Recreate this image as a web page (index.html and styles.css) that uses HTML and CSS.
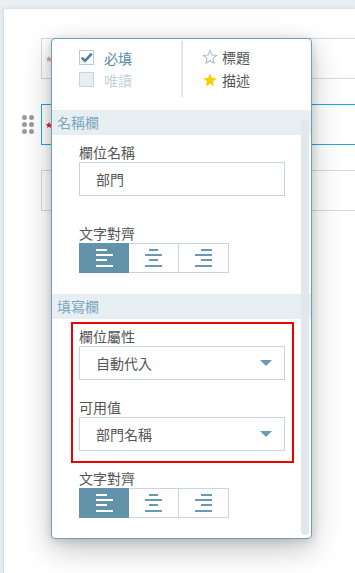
FILE: index.html
```html
<!DOCTYPE html>
<html lang="zh-Hant">
<head>
    <meta charset="UTF-8">
    <meta name="viewport" content="width=device-width, initial-scale=1.0">
    <title>欄位設定</title>
    <link rel="stylesheet" href="styles.css">
</head>
<body>
    <div class="sheet">
        <div class="field-row">
            <div class="handle-slot"></div>
            <div class="field-box">
                <svg class="req faded" viewBox="0 0 24 24"><path d="M12 2l2.9 6.9 7.1.6-5.4 4.7 1.6 7.1L12 17.6 5.8 21.3l1.6-7.1L2 9.5l7.1-.6z"/></svg>
            </div>
        </div>
        <div class="field-row">
            <div class="handle-slot">
                <div class="handle"><i></i><i></i><i></i><i></i><i></i><i></i></div>
            </div>
            <div class="field-box active">
                <svg class="req" viewBox="0 0 24 24"><path d="M12 2l2.9 6.9 7.1.6-5.4 4.7 1.6 7.1L12 17.6 5.8 21.3l1.6-7.1L2 9.5l7.1-.6z"/></svg>
            </div>
        </div>
        <div class="field-row">
            <div class="handle-slot"></div>
            <div class="field-box"></div>
        </div>
    </div>

    <div class="popover">
        <div class="pop-top">
            <div class="flags">
                <div class="check-item">
                    <span class="box">
                        <svg viewBox="0 0 13 13"><path d="M1.8 6.6 L5 9.8 L11.8 2.6"/></svg>
                    </span>
                    必填
                </div>
                <div class="check-item disabled">
                    <span class="box off"></span>
                    唯讀
                </div>
            </div>
            <div class="divider"></div>
            <div class="marks">
                <div class="mark-item">
                    <svg class="star outline" viewBox="0 0 24 24"><path d="M12 2l2.9 6.9 7.1.6-5.4 4.7 1.6 7.1L12 17.6 5.8 21.3l1.6-7.1L2 9.5l7.1-.6z"/></svg>
                    標題
                </div>
                <div class="mark-item">
                    <svg class="star filled" viewBox="0 0 24 24"><path d="M12 2l2.9 6.9 7.1.6-5.4 4.7 1.6 7.1L12 17.6 5.8 21.3l1.6-7.1L2 9.5l7.1-.6z"/></svg>
                    描述
                </div>
            </div>
        </div>

        <div class="section-head">名稱欄</div>
        <div class="section-body">
            <div class="label">欄位名稱</div>
            <div class="text-input">部門</div>
            <div class="label">文字對齊</div>
            <div class="align-group">
                <div class="align-btn on">
                    <svg viewBox="0 0 17 18"><rect x="0" y="0" width="11" height="2"/><rect x="0" y="5" width="17" height="2"/><rect x="0" y="10" width="11" height="2"/><rect x="0" y="16" width="17" height="2"/></svg>
                </div>
                <div class="align-btn">
                    <svg viewBox="0 0 17 18"><rect x="4" y="0" width="9" height="2"/><rect x="0" y="5" width="17" height="2"/><rect x="4" y="10" width="9" height="2"/><rect x="0" y="16" width="17" height="2"/></svg>
                </div>
                <div class="align-btn">
                    <svg viewBox="0 0 17 18"><rect x="6" y="0" width="11" height="2"/><rect x="0" y="5" width="17" height="2"/><rect x="6" y="10" width="11" height="2"/><rect x="0" y="16" width="17" height="2"/></svg>
                </div>
            </div>
        </div>

        <div class="section-head">填寫欄</div>
        <div class="section-body fill">
            <div class="highlight">
                <div class="label">欄位屬性</div>
                <div class="select">
                    <span>自動代入</span>
                    <span class="caret"></span>
                </div>
                <div class="label spaced">可用值</div>
                <div class="select">
                    <span>部門名稱</span>
                    <span class="caret"></span>
                </div>
            </div>
            <div class="label">文字對齊</div>
            <div class="align-group">
                <div class="align-btn on">
                    <svg viewBox="0 0 17 18"><rect x="0" y="0" width="11" height="2"/><rect x="0" y="5" width="17" height="2"/><rect x="0" y="10" width="11" height="2"/><rect x="0" y="16" width="17" height="2"/></svg>
                </div>
                <div class="align-btn">
                    <svg viewBox="0 0 17 18"><rect x="4" y="0" width="9" height="2"/><rect x="0" y="5" width="17" height="2"/><rect x="4" y="10" width="9" height="2"/><rect x="0" y="16" width="17" height="2"/></svg>
                </div>
                <div class="align-btn">
                    <svg viewBox="0 0 17 18"><rect x="6" y="0" width="11" height="2"/><rect x="0" y="5" width="17" height="2"/><rect x="6" y="10" width="11" height="2"/><rect x="0" y="16" width="17" height="2"/></svg>
                </div>
            </div>
        </div>

        <div class="scroll-thumb"></div>
    </div>
</body>
</html>
```

FILE: styles.css
```css
html, body {
    height: 100%;
}
body {
    margin: 0;
    background: #e9eef1;
    font-family: "Noto Sans CJK TC", "Noto Sans", sans-serif;
    overflow: hidden;
}
.sheet {
    margin: 9px 0 0 4px;
    height: 564px;
    box-sizing: border-box;
    padding-top: 29px;
    background: #fff;
    box-shadow: -1px 0 0 #d3dfe6, 0 0 4px rgba(90, 120, 140, 0.25);
    display: flex;
    flex-direction: column;
    gap: 25px;
}
.field-row {
    display: flex;
    height: 41px;
}
.handle-slot {
    width: 37px;
    flex: none;
    box-sizing: border-box;
    padding-left: 18px;
    display: flex;
    align-items: center;
}
.handle {
    display: grid;
    grid-template-columns: 5px 5px;
    gap: 2px 2px;
}
.handle i {
    width: 5px;
    height: 5px;
    border-radius: 50%;
    background: #9c9c9c;
}
.field-box {
    flex: 1;
    border: 1px solid #d9d9d9;
    border-right: none;
    display: flex;
    align-items: center;
    padding-left: 3px;
}
.field-box.active {
    border-color: #1fa9e1;
}
.req {
    width: 8px;
    height: 8px;
    fill: #e2262b;
}
.req.faded {
    fill: #eba3a6;
}

/* popover */
.popover {
    position: absolute;
    left: 51px;
    top: 38px;
    width: 261px;
    box-sizing: border-box;
    background: #fff;
    border: 1px solid #6d9fb5;
    border-radius: 4px;
    box-shadow: 0 10px 30px rgba(0, 0, 0, 0.24), 0 2px 10px rgba(0, 0, 0, 0.14);
}
.pop-top {
    display: flex;
    height: 71px;
}
.flags {
    width: 129px;
    box-sizing: border-box;
    padding: 11px 0 0 27px;
    display: flex;
    flex-direction: column;
    gap: 7px;
}
.check-item {
    display: flex;
    align-items: center;
    gap: 10px;
    height: 15px;
    font-size: 14px;
    color: #5a8aa4;
}
.check-item.disabled {
    color: #c3d5de;
}
.box {
    width: 15px;
    height: 15px;
    box-sizing: border-box;
    border: 1px solid #b8ccd7;
    background: #fff;
    display: flex;
}
.box svg {
    width: 13px;
    height: 13px;
    fill: none;
    stroke: #4f7f99;
    stroke-width: 2.6;
}
.box.off {
    background: #e7eef2;
    border-color: #c8d7df;
}
.divider {
    width: 2px;
    height: 56px;
    margin-top: 2px;
    background: #dfe7ec;
}
.marks {
    padding: 10px 0 0 19px;
    display: flex;
    flex-direction: column;
    gap: 8px;
}
.mark-item {
    display: flex;
    align-items: center;
    gap: 4px;
    height: 15px;
    font-size: 14px;
    color: #555;
}
.star {
    width: 16px;
    height: 16px;
}
.star.outline {
    fill: none;
    stroke: #a9c0cc;
    stroke-width: 1.6;
}
.star.filled {
    fill: #f7d000;
}
.section-head {
    height: 25px;
    line-height: 25px;
    padding-left: 5px;
    background: #e8eff3;
    color: #7ea7bb;
    font-size: 14px;
}
.section-body {
    padding: 7px 0 21px 27px;
}
.section-body.fill {
    padding: 3px 0 20px 27px;
}
.label {
    font-size: 14px;
    line-height: 20px;
    color: #555;
}
.label.spaced {
    margin-top: 17px;
}
.text-input {
    width: 206px;
    height: 34px;
    box-sizing: border-box;
    border: 1px solid #c3d6e0;
    padding-left: 16px;
    font-size: 14px;
    line-height: 32px;
    color: #555;
    margin-bottom: 27px;
}
.align-group {
    display: flex;
    width: 150px;
}
.align-btn {
    width: 50px;
    height: 30px;
    box-sizing: border-box;
    border: 1px solid #c6d7e0;
    background: #fff;
    display: flex;
    align-items: center;
    justify-content: center;
    fill: #6a9ab2;
}
.align-btn + .align-btn {
    border-left: none;
}
.align-btn.on {
    background: #6393ab;
    border-color: #6393ab;
    fill: #fff;
}
.align-btn svg {
    width: 17px;
    height: 18px;
}
.highlight {
    width: 223px;
    margin: 0 0 5px -8px;
    box-sizing: border-box;
    border: 2px solid #ee0000;
    padding: 2px 7px 10px 6px;
}
.select {
    height: 34px;
    box-sizing: border-box;
    border: 1px solid #c3d6e0;
    padding: 0 12px 0 16px;
    display: flex;
    align-items: center;
    justify-content: space-between;
    font-size: 14px;
    color: #555;
}
.caret {
    width: 0;
    height: 0;
    border-left: 6px solid transparent;
    border-right: 6px solid transparent;
    border-top: 6px solid #6a9ab2;
}
.scroll-thumb {
    position: absolute;
    right: 2px;
    top: 80px;
    bottom: 3px;
    width: 8px;
    border-radius: 4px;
    background: #e1e8ec;
}
```
